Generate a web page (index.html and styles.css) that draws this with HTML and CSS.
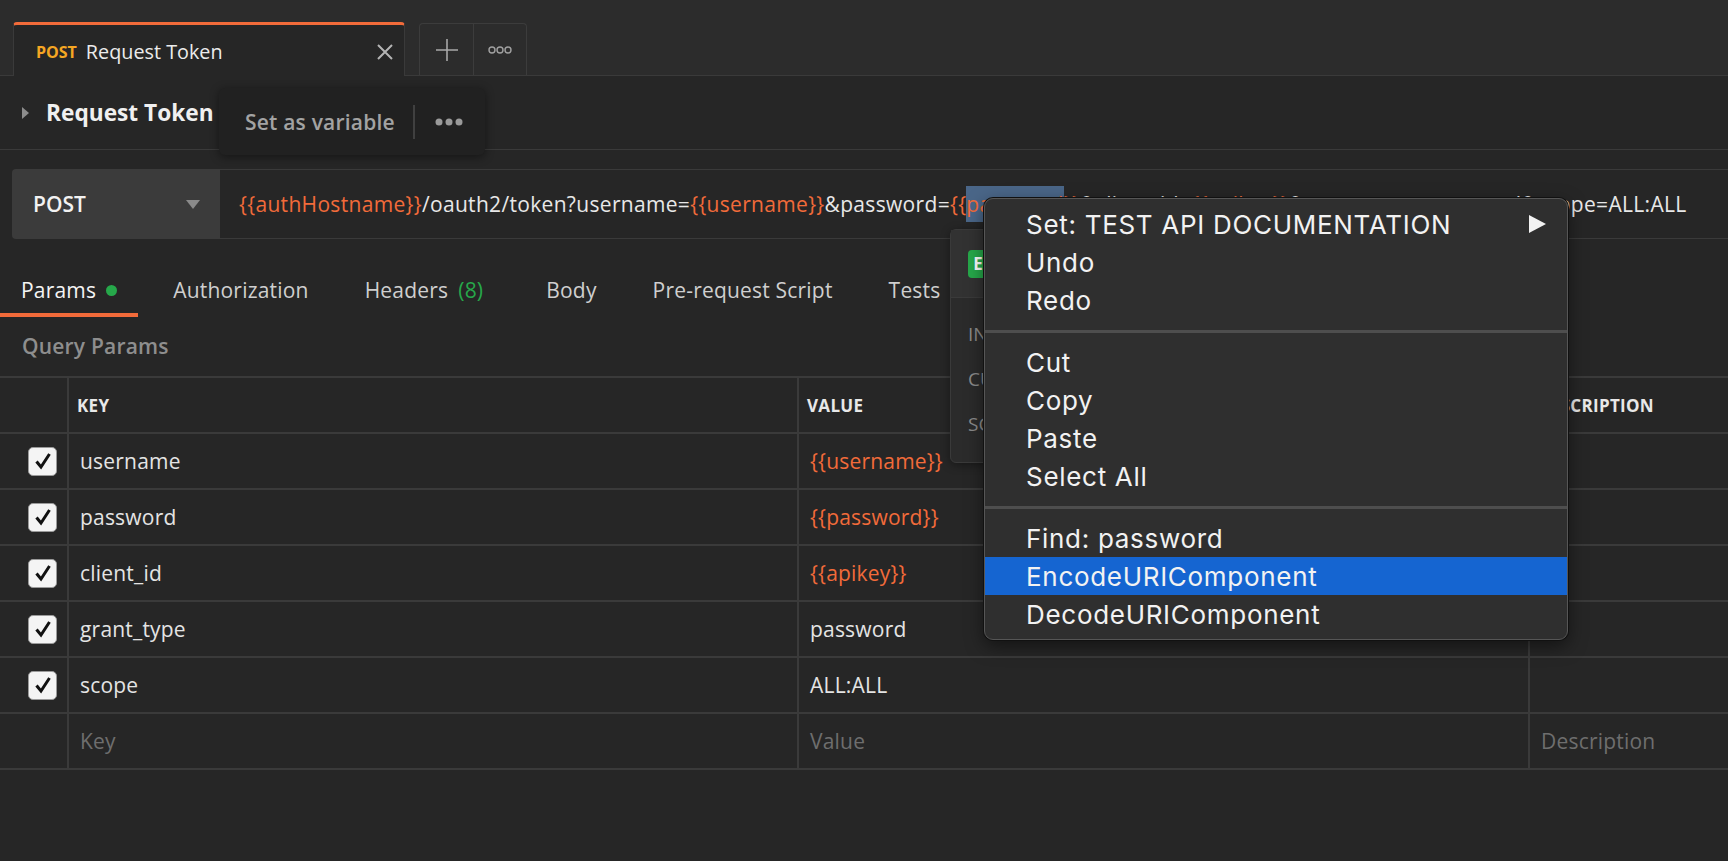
FILE: index.html
```html
<!DOCTYPE html>
<html>
<head>
<meta charset="utf-8">
<title>Request Token</title>
<link rel="stylesheet" href="styles.css">
</head>
<body>
<div class="app">
  <div class="tabbar">
    <div class="tab">
      <span class="tab-method">POST</span>
      <span class="tab-title">Request Token</span>
      <svg class="tab-close" width="18" height="18" viewBox="0 0 18 18"><path d="M2 2 L16 16 M16 2 L2 16" stroke="#b4b4b4" stroke-width="2" fill="none"/></svg>
    </div>
    <div class="tab-actions">
      <div class="tab-action"><svg width="24" height="24" viewBox="0 0 24 24"><path d="M12 1 V23 M1 12 H23" stroke="#a8a8a8" stroke-width="1.6" fill="none"/></svg></div>
      <div class="tab-action"><svg width="24" height="10" viewBox="0 0 24 10"><circle cx="4" cy="5" r="3" stroke="#a0a0a0" stroke-width="1.4" fill="none"/><circle cx="12" cy="5" r="3" stroke="#a0a0a0" stroke-width="1.4" fill="none"/><circle cx="20" cy="5" r="3" stroke="#a0a0a0" stroke-width="1.4" fill="none"/></svg></div>
    </div>
  </div>

  <div class="req-header">
    <svg class="req-caret" width="9" height="14" viewBox="0 0 9 14"><path d="M1 1 L8 7 L1 13 Z" fill="#8c8c8c"/></svg>
    <span class="req-name">Request Token</span>
  </div>

  <div class="url-row">
    <div class="method">
      <span>POST</span>
      <svg class="method-caret" width="14" height="9" viewBox="0 0 14 9"><path d="M0 0 H14 L7 9 Z" fill="#8a8a8a"/></svg>
    </div>
    <div class="url-input"><span class="var">{{authHostname}}</span>/oauth2/token?username=<span class="var">{{username}}</span>&amp;password=<span class="var">{{<span class="sel">password</span>}}</span>&amp;client_id=<span class="var">{{apikey}}</span>&amp;grant_type=password&amp;scope=ALL:ALL</div>
  </div>

  <div class="req-tabs">
    <div class="rtab active">Params<span class="dot"></span></div>
    <div class="rtab">Authorization</div>
    <div class="rtab">Headers <span class="count">(8)</span></div>
    <div class="rtab">Body</div>
    <div class="rtab">Pre-request Script</div>
    <div class="rtab">Tests<span class="dot"></span></div>
    <div class="rtab">Settings</div>
  </div>

  <div class="section-title">Query Params</div>

  <div class="ptable">
    <div class="prow phead">
      <div class="pcell"></div>
      <div class="pcell">KEY</div>
      <div class="pcell">VALUE</div>
      <div class="pcell">DESCRIPTION</div>
    </div>
    <div class="prow">
      <div class="pcell"><span class="cb"><svg width="20" height="20" viewBox="0 0 20 20"><path d="M3.5 10.5 L8 16 L16.5 3" stroke="#111" stroke-width="3" fill="none"/></svg></span></div>
      <div class="pcell">username</div>
      <div class="pcell var">{{username}}</div>
      <div class="pcell"></div>
    </div>
    <div class="prow">
      <div class="pcell"><span class="cb"><svg width="20" height="20" viewBox="0 0 20 20"><path d="M3.5 10.5 L8 16 L16.5 3" stroke="#111" stroke-width="3" fill="none"/></svg></span></div>
      <div class="pcell">password</div>
      <div class="pcell var">{{password}}</div>
      <div class="pcell"></div>
    </div>
    <div class="prow">
      <div class="pcell"><span class="cb"><svg width="20" height="20" viewBox="0 0 20 20"><path d="M3.5 10.5 L8 16 L16.5 3" stroke="#111" stroke-width="3" fill="none"/></svg></span></div>
      <div class="pcell">client_id</div>
      <div class="pcell var">{{apikey}}</div>
      <div class="pcell"></div>
    </div>
    <div class="prow">
      <div class="pcell"><span class="cb"><svg width="20" height="20" viewBox="0 0 20 20"><path d="M3.5 10.5 L8 16 L16.5 3" stroke="#111" stroke-width="3" fill="none"/></svg></span></div>
      <div class="pcell">grant_type</div>
      <div class="pcell">password</div>
      <div class="pcell"></div>
    </div>
    <div class="prow">
      <div class="pcell"><span class="cb"><svg width="20" height="20" viewBox="0 0 20 20"><path d="M3.5 10.5 L8 16 L16.5 3" stroke="#111" stroke-width="3" fill="none"/></svg></span></div>
      <div class="pcell">scope</div>
      <div class="pcell">ALL:ALL</div>
      <div class="pcell"></div>
    </div>
    <div class="prow placeholder">
      <div class="pcell"></div>
      <div class="pcell">Key</div>
      <div class="pcell">Value</div>
      <div class="pcell">Description</div>
    </div>
  </div>
</div>

<div class="tooltip">
  <span class="tt-text">Set as variable</span>
  <span class="tt-sep"></span>
  <svg width="28" height="8" viewBox="0 0 28 8"><circle cx="4" cy="4" r="3.5" fill="#9a9a9a"/><circle cx="14" cy="4" r="3.5" fill="#9a9a9a"/><circle cx="24" cy="4" r="3.5" fill="#9a9a9a"/></svg>
</div>

<div class="var-popup">
  <div class="vp-head"><span class="vp-badge">E</span><span class="vp-env">TEST API DOCUMENTATION</span></div>
  <div class="vp-rows">
    <div class="vp-row">INITIAL VALUE</div>
    <div class="vp-row">CURRENT VALUE</div>
    <div class="vp-row">SCOPE</div>
  </div>
</div>

<div class="ctx-menu">
  <div class="mi">Set: TEST API DOCUMENTATION<svg class="mi-arrow" width="20" height="20" viewBox="0 0 20 20"><path d="M2 1 L19 10 L2 19 Z" fill="#f2f2f2"/></svg></div>
  <div class="mi">Undo</div>
  <div class="mi">Redo</div>
  <div class="msep"></div>
  <div class="mi">Cut</div>
  <div class="mi">Copy</div>
  <div class="mi">Paste</div>
  <div class="mi">Select All</div>
  <div class="msep"></div>
  <div class="mi">Find: password</div>
  <div class="mi hl">EncodeURIComponent</div>
  <div class="mi">DecodeURIComponent</div>
</div>
</body>
</html>
```

FILE: styles.css
```css
* { box-sizing: border-box; margin: 0; padding: 0; }
html, body { width: 1728px; height: 861px; overflow: hidden; }
body {
  background: #262626;
  font-family: "Open Sans", "Noto Sans", sans-serif;
  color: #e6e6e6;
  position: relative;
}

/* tab strip */
.tabbar {
  height: 76px;
  background: #2c2c2c;
  border-bottom: 1px solid #3a3a3a;
  display: flex;
  align-items: flex-end;
  padding-left: 13px;
}
.tab {
  width: 392px;
  height: 54px;
  margin-bottom: -1px;
  background: #262626;
  border: 1px solid #3a3a3a;
  border-top: 3px solid #f26b3a;
  border-bottom: none;
  border-radius: 4px 4px 0 0;
  display: flex;
  align-items: center;
  padding: 2px 10px 0 22px;
}
.tab-method { font-size: 16px; font-weight: 700; color: #f5a623; margin-right: 9px; }
.tab-title { font-size: 19.8px; color: #ececec; }
.tab-close { margin-left: auto; }
.tab-actions {
  margin-left: 14px;
  height: 52px;
  display: flex;
  border: 1px solid #3c3c3c;
  border-bottom: none;
  border-radius: 4px 4px 0 0;
}
.tab-action {
  width: 53px;
  display: flex;
  align-items: center;
  justify-content: center;
}
.tab-action + .tab-action { border-left: 1px solid #3c3c3c; }

/* request header */
.req-header {
  height: 74px;
  border-bottom: 1px solid #3a3a3a;
  display: flex;
  align-items: center;
  padding-left: 21px;
}
.req-name { font-size: 22.7px; font-weight: 700; color: #f0f0f0; margin-left: 16px; }

/* url row */
.url-row {
  margin-top: 19px;
  height: 70px;
  display: flex;
  padding-left: 12px;
}
.method {
  width: 208px;
  background: #3b3b3b;
  border-radius: 4px 0 0 4px;
  display: flex;
  align-items: center;
  padding: 0 20px 0 21px;
  font-size: 21px;
  font-weight: 600;
  color: #f2f2f2;
}
.method-caret { margin-left: auto; }
.url-input {
  flex: 1;
  border-top: 1px solid #3a3a3a;
  border-bottom: 1px solid #3a3a3a;
  display: flex;
  align-items: center;
  padding-left: 19px;
  font-size: 21px;
  letter-spacing: 0.32px;
  color: #e8e8e8;
  white-space: pre;
}
.var { color: #f26b3a; }
.sel { background: #4a6688; padding: 4px 0; }

/* request tabs */
.req-tabs {
  margin-top: 24px;
  height: 54px;
  display: flex;
  gap: 14px;
}
.rtab {
  padding: 4px 21px 0;
  border-bottom: 4px solid transparent;
  display: flex;
  align-items: center;
  font-size: 21px;
  letter-spacing: 0.2px;
  color: #cfcfcf;
}
.rtab.active { color: #f4f4f4; border-bottom-color: #f26b3a; }
.dot { width: 11px; height: 11px; border-radius: 50%; background: #26a84a; margin-left: 10px; }
.count { color: #26a84a; margin-left: 10px; margin-right: 7px; }

.section-title {
  height: 59px;
  padding: 15px 0 0 22px;
  font-size: 21px;
  letter-spacing: 0.2px;
  font-weight: 600;
  color: #8e8e8e;
}

/* table */
.ptable { border-top: 2px solid #3a3a3a; }
.prow {
  height: 56px;
  display: grid;
  grid-template-columns: 67px 730px 731px 1fr;
  border-bottom: 2px solid #3a3a3a;
}
.pcell {
  display: flex;
  align-items: center;
  padding-left: 11px;
  font-size: 21px;
  letter-spacing: 0.2px;
  color: #e4e4e4;
}
.pcell + .pcell { border-left: 2px solid #3a3a3a; }
.pcell:first-child { padding-left: 28px; }
.pcell.var { color: #f26b3a; }
.phead .pcell { font-size: 17px; font-weight: 700; color: #e8e8e8; padding-left: 8px; letter-spacing: 0.3px; }
.placeholder .pcell { color: #6e6e6e; }
.cb {
  width: 29px;
  height: 29px;
  background: #f4f4f4;
  border: 1px solid #9a9a9a;
  border-radius: 5px;
  display: flex;
  align-items: center;
  justify-content: center;
}

/* overlays */
.tooltip {
  position: absolute;
  left: 219px;
  top: 88px;
  width: 266px;
  height: 67px;
  background: #212121;
  border-radius: 6px;
  box-shadow: 0 2px 10px rgba(0,0,0,0.45);
  display: flex;
  align-items: center;
  padding-left: 26px;
}
.tt-text { font-size: 21px; letter-spacing: 0.2px; font-weight: 600; color: #a3a3a3; }
.tt-sep { width: 2px; height: 34px; background: #404040; margin: 0 20px 0 18px; }

.var-popup {
  position: absolute;
  left: 950px;
  top: 229px;
  width: 330px;
  height: 234px;
  background: #2b2b2b;
  border: 1px solid #3a3a3a;
  border-radius: 6px;
  box-shadow: 0 2px 10px rgba(0,0,0,0.4);
}
.vp-head {
  height: 68px;
  background: #323232;
  border-bottom: 1px solid #3a3a3a;
  display: flex;
  align-items: center;
  padding-left: 17px;
}
.vp-badge {
  width: 20px;
  height: 28px;
  background: #26a84a;
  border-radius: 4px;
  color: #fff;
  font-size: 17px;
  font-weight: 700;
  display: flex;
  align-items: center;
  justify-content: center;
}
.vp-env { margin-left: 8px; font-size: 17px; color: #ddd; }
.vp-rows { padding-top: 13px; }
.vp-row {
  height: 45px;
  display: flex;
  align-items: center;
  padding-left: 17px;
  font-size: 19px;
  color: #8a8a8a;
}

.ctx-menu {
  position: absolute;
  left: 984px;
  top: 198px;
  width: 584px;
  height: 442px;
  background: #2f2f2f;
  border: 1px solid #565656;
  border-radius: 9px;
  box-shadow: 0 0 0 1px #111, 0 6px 18px rgba(0,0,0,0.5);
  padding: 6px 0;
  font-family: "Inter", "Roboto", sans-serif;
  font-size: 26px;
  letter-spacing: 0.7px;
  color: #f2f2f2;
}
.mi {
  height: 38px;
  display: flex;
  align-items: center;
  padding-left: 41px;
}
.mi.hl { background: #1565d1; }
.mi-arrow { margin-left: auto; margin-right: 20px; }
.msep {
  height: 24px;
  display: flex;
  align-items: center;
}
.msep::before {
  content: "";
  display: block;
  width: 100%;
  height: 3px;
  background: #4e4e4e;
}
```
